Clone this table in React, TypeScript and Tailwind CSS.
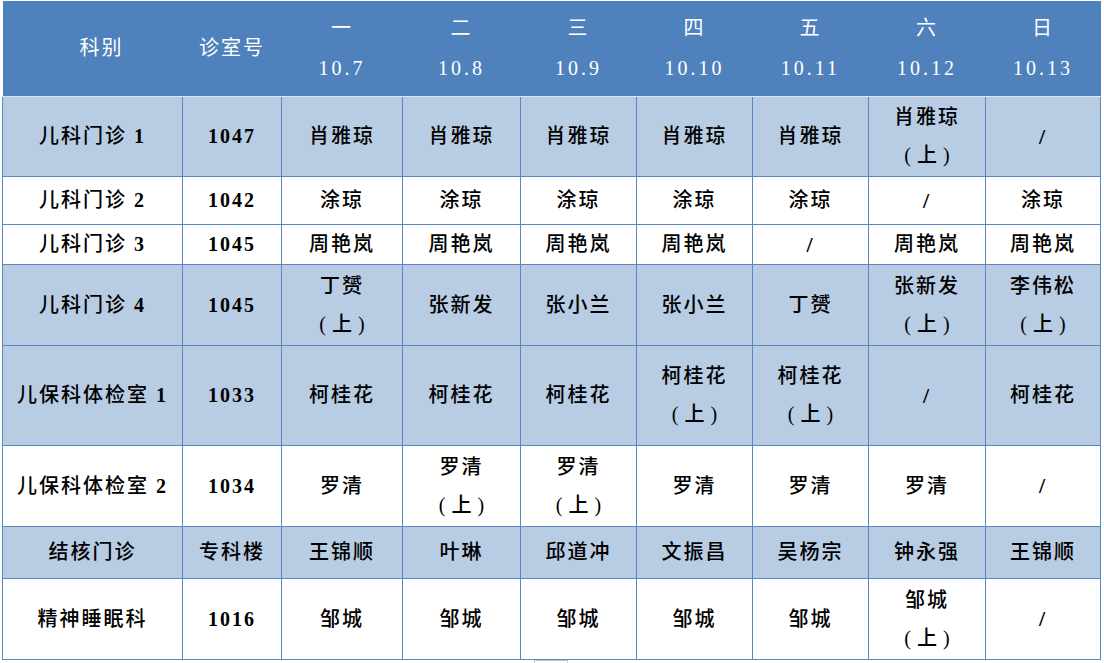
import React from "react";

type Row = {
    dept: string;
    room: string;
    cells: string[];
    height: string;
    shaded: boolean;
};

const days = [
    { day: "一", date: "10.7" },
    { day: "二", date: "10.8" },
    { day: "三", date: "10.9" },
    { day: "四", date: "10.10" },
    { day: "五", date: "10.11" },
    { day: "六", date: "10.12" },
    { day: "日", date: "10.13" },
];

const HALF = "|上";

const rows: Row[] = [
    {
        dept: "儿科门诊 1",
        room: "1047",
        cells: ["肖雅琼", "肖雅琼", "肖雅琼", "肖雅琼", "肖雅琼", "肖雅琼" + HALF, "/"],
        height: "h-[80px]",
        shaded: true,
    },
    {
        dept: "儿科门诊 2",
        room: "1042",
        cells: ["涂琼", "涂琼", "涂琼", "涂琼", "涂琼", "/", "涂琼"],
        height: "h-[48px]",
        shaded: false,
    },
    {
        dept: "儿科门诊 3",
        room: "1045",
        cells: ["周艳岚", "周艳岚", "周艳岚", "周艳岚", "/", "周艳岚", "周艳岚"],
        height: "h-[40px]",
        shaded: false,
    },
    {
        dept: "儿科门诊 4",
        room: "1045",
        cells: ["丁赟" + HALF, "张新发", "张小兰", "张小兰", "丁赟", "张新发" + HALF, "李伟松" + HALF],
        height: "h-[81px]",
        shaded: true,
    },
    {
        dept: "儿保科体检室 1",
        room: "1033",
        cells: ["柯桂花", "柯桂花", "柯桂花", "柯桂花" + HALF, "柯桂花" + HALF, "/", "柯桂花"],
        height: "h-[100px]",
        shaded: true,
    },
    {
        dept: "儿保科体检室 2",
        room: "1034",
        cells: ["罗清", "罗清" + HALF, "罗清" + HALF, "罗清", "罗清", "罗清", "/"],
        height: "h-[81px]",
        shaded: false,
    },
    {
        dept: "结核门诊",
        room: "专科楼",
        cells: ["王锦顺", "叶琳", "邱道冲", "文振昌", "吴杨宗", "钟永强", "王锦顺"],
        height: "h-[52px]",
        shaded: true,
    },
    {
        dept: "精神睡眠科",
        room: "1016",
        cells: ["邹城", "邹城", "邹城", "邹城", "邹城", "邹城" + HALF, "/"],
        height: "h-[81px]",
        shaded: false,
    },
];

// digits come out in bold serif, the chinese stays medium
function Mixed({ text }: { text: string }) {
    const parts = text.split(/(\d+)/).filter(Boolean);
    return (
        <>
            {parts.map((p, i) =>
                /\d/.test(p) ? (
                    <span key={i} className="font-bold">{p}</span>
                ) : (
                    <span key={i}>{p}</span>
                )
            )}
        </>
    );
}

function Cell({ text }: { text: string }) {
    if (text === "/") {
        return <span className="font-bold text-[22px]">/</span>;
    }
    const [name, half] = text.split("|");
    return (
        <div className="flex flex-col items-center leading-[38px]">
            <span>{name}</span>
            {half && <span className="tracking-[6px] pl-[6px]">({half})</span>}
        </div>
    );
}

export default function App() {
    return (
        <div className="min-h-screen bg-white pl-[2px] pt-[1px] font-['Liberation_Serif','Noto_Sans_CJK_SC',serif]">
            <table className="table-fixed border-collapse w-[1098px] text-[20px] tracking-[2px]">
                <colgroup>
                    <col className="w-[180px]" />
                    <col className="w-[99px]" />
                    <col className="w-[121px]" />
                    <col className="w-[118px]" />
                    <col className="w-[116px]" />
                    <col className="w-[116px]" />
                    <col className="w-[116px]" />
                    <col className="w-[117px]" />
                    <col className="w-[115px]" />
                </colgroup>
                <thead>
                    <tr className="h-[95px] bg-[#4f81bd] text-white">
                        <th className="font-normal border-b border-[#dce6f1] pl-[18px]">科别</th>
                        <th className="font-normal border-b border-[#dce6f1]">诊室号</th>
                        {days.map((d) => (
                            <th key={d.date} className="font-normal border-b border-[#dce6f1] leading-[40px]">
                                <div className="flex flex-col items-center">
                                    <span>{d.day}</span>
                                    <span className="tracking-[3px]">{d.date}</span>
                                </div>
                            </th>
                        ))}
                    </tr>
                </thead>
                <tbody className="text-black">
                    {rows.map((row) => (
                        <tr key={row.dept} className={`${row.height} ${row.shaded ? "bg-[#b8cce4]" : "bg-white"}`}>
                            <td className="border border-[#5a87c2] text-center font-medium">
                                <Mixed text={row.dept} />
                            </td>
                            <td className="border border-[#5a87c2] text-center font-medium">
                                <Mixed text={row.room} />
                            </td>
                            {row.cells.map((c, i) => (
                                <td key={i} className="border border-[#5a87c2] text-center font-medium">
                                    <Cell text={c} />
                                </td>
                            ))}
                        </tr>
                    ))}
                </tbody>
            </table>
            <div className="ml-[532px] w-[34px] h-[3px] border-x border-t border-[#c8c8c8]" />
        </div>
    );
}
